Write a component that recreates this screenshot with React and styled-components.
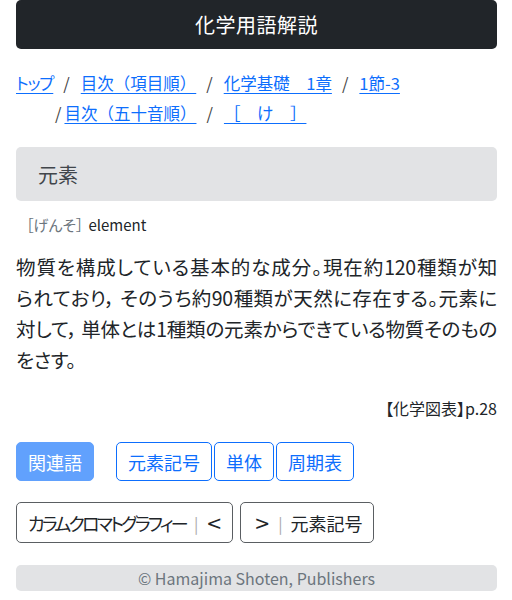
import styled, { createGlobalStyle } from 'styled-components';

const GlobalStyle = createGlobalStyle`
  body {
    margin: 0;
    background: #fff;
    color: #212529;
    font-family: "Noto Sans CJK JP", "Noto Sans", sans-serif;
  }
`;

const Page = styled.div`
  display: flex;
  flex-direction: column;
  padding: 0 15px 0 16px;
`;

const Header = styled.header`
  height: 49px;
  display: flex;
  align-items: center;
  justify-content: center;
  background: #212529;
  color: #fff;
  border-radius: 5px;
  font-size: 20px;
  letter-spacing: 0.5px;
`;

const Crumbs = styled.nav`
  margin-top: 19px;
  display: flex;
  flex-direction: column;
  font-size: 16.5px;
  line-height: 30px;
`;

const CrumbRow = styled.div`
  display: flex;
  align-items: baseline;
  padding-left: ${(p) => p.$indent || 0}px;
`;

const CrumbLink = styled.a`
  color: #0d6efd;
  text-decoration: underline;
  text-underline-offset: 3px;
  white-space: pre;
  font-feature-settings: ${(p) => (p.$narrow ? '"palt"' : 'normal')};
  letter-spacing: ${(p) => (p.$narrow ? '-1.2px' : '0')};
`;

const Sep = styled.span`
  color: #444;
  margin: 0 ${(p) => (p.$tight ? 3 : 11)}px 0 ${(p) => (p.$tight ? 0 : 10)}px;
`;

const TermBox = styled.div`
  margin-top: 19px;
  height: 54px;
  display: flex;
  align-items: center;
  padding-left: 22px;
  background: #e2e3e5;
  border-radius: 5px;
  color: #41464b;
  font-size: 20px;
`;

const Reading = styled.div`
  margin-top: 12px;
  display: flex;
  align-items: baseline;
  gap: 5px;
  padding-left: 10px;
  font-size: 15px;
  line-height: 24px;
  font-feature-settings: "palt";
`;

const Kana = styled.span`
  color: #6c757d;
`;

const Body = styled.p`
  margin: 14px 0 0;
  font-size: 19.5px;
  line-height: 31px;
  letter-spacing: -0.3px;
  color: #212529;
  font-feature-settings: "palt";
`;

const Line = styled.span`
  display: block;
  white-space: nowrap;
  text-align: left;
  text-align-last: ${(p) => (p.$last ? 'left' : 'justify')};
`;

const Source = styled.div`
  margin-top: 21px;
  text-align: right;
  font-size: 16px;
  line-height: 24px;
  font-feature-settings: "palt";
`;

const ButtonRow = styled.div`
  display: flex;
  align-items: center;
  gap: ${(p) => p.$gap}px;
  margin-top: ${(p) => p.$top}px;
`;

const Group = styled.div`
  display: flex;
  gap: 2px;
`;

const Button = styled.button`
  display: flex;
  align-items: center;
  font-family: inherit;
  font-feature-settings: "palt";
  font-size: 18px;
  height: ${(p) => p.$h || 39}px;
  padding: 0 ${(p) => p.$pr || 11}px 0 ${(p) => p.$pl || 11}px;
  border-radius: 5px;
  cursor: pointer;
  background: ${(p) => (p.$variant === 'filled' ? '#61a1fd' : '#fff')};
  color: ${(p) =>
    p.$variant === 'filled' ? '#fff' : p.$variant === 'dark' ? '#212529' : '#0d6efd'};
  border: 1px solid
    ${(p) =>
      p.$variant === 'filled' ? '#61a1fd' : p.$variant === 'dark' ? '#5a5e62' : '#0d6efd'};
`;

const Katakana = styled.span`
  letter-spacing: -2.7px;
`;

const Arrow = styled.span`
  font-family: "DejaVu Sans", sans-serif;
  font-size: 19px;
  color: #212529;
`;

const Bar = styled.span`
  color: #aaa;
  font-size: 16px;
  margin: 0 8px;
`;

const Footer = styled.footer`
  margin-top: 22px;
  height: 26px;
  display: flex;
  align-items: center;
  justify-content: center;
  background: #e2e3e5;
  border-radius: 5px;
  color: #6c757d;
  font-size: 16px;
`;

export default function App() {
  return (
    <>
      <GlobalStyle />
      <Page>
        <Header>化学用語解説</Header>
        <Crumbs>
          <CrumbRow>
            <CrumbLink href="#" $narrow>トップ</CrumbLink>
            <Sep>/</Sep>
            <CrumbLink href="#">目次（項目順）</CrumbLink>
            <Sep>/</Sep>
            <CrumbLink href="#">化学基礎　1章</CrumbLink>
            <Sep>/</Sep>
            <CrumbLink href="#">1節-3</CrumbLink>
          </CrumbRow>
          <CrumbRow $indent={39}>
            <Sep $tight>/</Sep>
            <CrumbLink href="#">目次（五十音順）</CrumbLink>
            <Sep>/</Sep>
            <CrumbLink href="#">［　け　］</CrumbLink>
          </CrumbRow>
        </Crumbs>
        <TermBox>元素</TermBox>
        <Reading>
          <Kana>［げんそ］</Kana>
          <span>element</span>
        </Reading>
        <Body>
          <Line>物質を構成している基本的な成分。現在約120種類が知</Line>
          <Line>られており， そのうち約90種類が天然に存在する。元素に</Line>
          <Line>対して， 単体とは1種類の元素からできている物質そのもの</Line>
          <Line $last>をさす。</Line>
        </Body>
        <Source>【化学図表】p.28</Source>
        <ButtonRow $gap={22} $top={22}>
          <Button $variant="filled">関連語</Button>
          <Group>
            <Button>元素記号</Button>
            <Button>単体</Button>
            <Button>周期表</Button>
          </Group>
        </ButtonRow>
        <ButtonRow $gap={7} $top={21}>
          <Button $variant="dark" $h={41} $pl={11} $pr={10}>
            <Katakana>カラムクロマトグラフィー</Katakana>
            <Bar>|</Bar>
            <Arrow>&lt;</Arrow>
          </Button>
          <Button $variant="dark" $h={41} $pl={13} $pr={10}>
            <Arrow>&gt;</Arrow>
            <Bar>|</Bar>元素記号
          </Button>
        </ButtonRow>
        <Footer>© Hamajima Shoten, Publishers</Footer>
      </Page>
    </>
  );
}
